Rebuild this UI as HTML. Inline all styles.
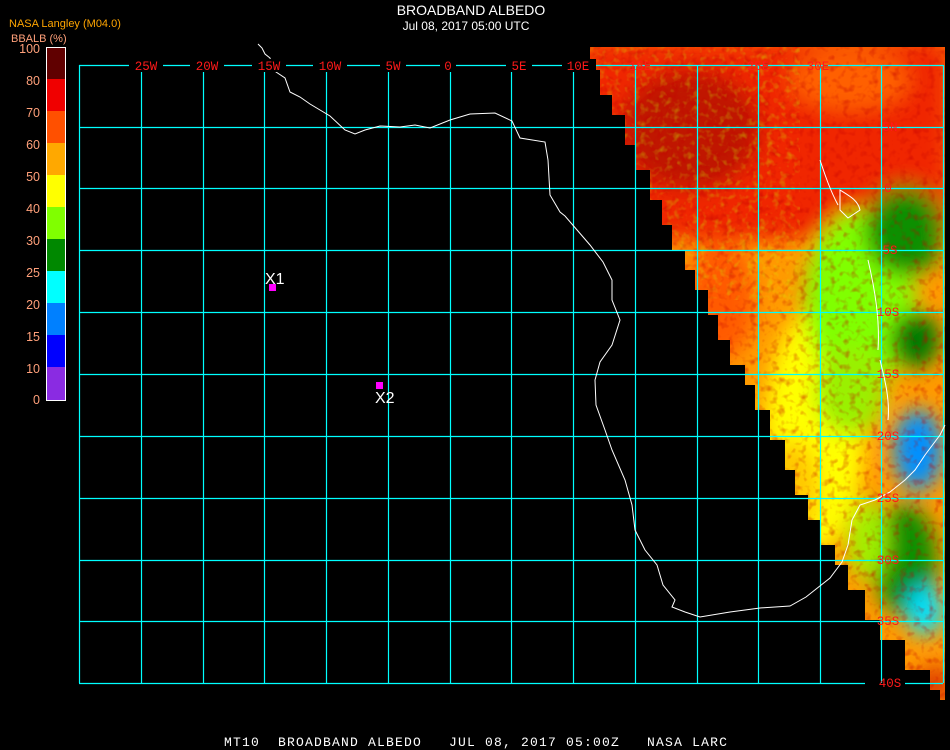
<!DOCTYPE html>
<html><head><meta charset="utf-8"><style>
html,body{margin:0;padding:0;background:#000;}
svg{display:block}
</style></head><body>
<svg width="950" height="750" viewBox="0 0 950 750" xmlns="http://www.w3.org/2000/svg" font-family="Liberation Sans, sans-serif">
<defs>
<clipPath id="dc"><polygon points="585,47 945,47 945,700 940,700 940,690 930,690 930,670 905,670 905,640 880,640 880,620 865,620 865,590 848,590 848,565 835,565 835,545 820,545 820,520 808,520 808,495 795,495 795,470 785,470 785,440 770,440 770,410 755,410 755,385 745,385 745,365 730,365 730,340 718,340 718,315 708,315 708,290 695,290 695,270 685,270 685,250 672,250 672,225 662,225 662,200 650,200 650,170 636,170 636,145 625,145 625,115 612,115 612,95 600,95 600,70 590,70 590,47"/></clipPath>
<filter id="bl"><feGaussianBlur stdDeviation="10"/></filter>
<filter id="nz" x="0" y="0" width="100%" height="100%"><feTurbulence type="fractalNoise" baseFrequency="0.14" numOctaves="2" seed="4"/><feColorMatrix type="matrix" values="0 0 0 0 0.55  0 0 0 0 0  0 0 0 0 0  0 0 0 -2.6 1.3"/></filter>
<filter id="nz2" x="0" y="0" width="100%" height="100%"><feTurbulence type="fractalNoise" baseFrequency="0.15" numOctaves="2" seed="9"/><feColorMatrix type="matrix" values="0 0 0 0 0.6  0 0 0 0 1  0 0 0 0 0  0 0 0 -2.6 1.3"/></filter>
</defs>
<rect width="950" height="750" fill="#000"/>
<g clip-path="url(#dc)">
<rect x="580" y="40" width="370" height="670" fill="#ff9a00"/>
<g filter="url(#bl)">
<rect x="580" y="40" width="370" height="200" fill="#f02800"/>
<ellipse cx="690" cy="130" rx="70" ry="60" fill="#c01800"/>
<ellipse cx="720" cy="300" rx="35" ry="60" fill="#ff5a00"/>
<ellipse cx="815" cy="430" rx="50" ry="120" fill="#ffff00"/>
<ellipse cx="790" cy="490" rx="30" ry="50" fill="#ffc800"/>
<ellipse cx="860" cy="300" rx="55" ry="90" fill="#80ff00"/>
<ellipse cx="850" cy="390" rx="35" ry="45" fill="#9af000"/>
<ellipse cx="905" cy="230" rx="40" ry="45" fill="#108f00"/>
<ellipse cx="915" cy="340" rx="25" ry="28" fill="#007a00"/>
<ellipse cx="918" cy="450" rx="24" ry="40" fill="#0090ff"/>
<ellipse cx="905" cy="560" rx="32" ry="55" fill="#109000"/>
<ellipse cx="868" cy="540" rx="20" ry="40" fill="#a0f000"/>
<ellipse cx="925" cy="610" rx="18" ry="25" fill="#00e0ff"/>
<ellipse cx="935" cy="685" rx="20" ry="20" fill="#e04000"/>
<ellipse cx="850" cy="80" rx="60" ry="30" fill="#ff6000"/>
</g>
<rect x="580" y="40" width="370" height="670" filter="url(#nz)" opacity="0.45"/>
<rect x="580" y="40" width="220" height="260" filter="url(#nz2)" opacity="0.35"/>
</g>
<g stroke="#00ffff" stroke-width="1.2" fill="none">
<path d="M79.5 65V683 M141.5 65V683 M203.5 65V683 M264.5 65V683 M326.5 65V683 M388.5 65V683 M450.5 65V683 M511.5 65V683 M573.5 65V683 M635.5 65V683 M697.5 65V683 M758.5 65V683 M820.5 65V683 M881.5 65V683 M943.5 65V683"/>
<path d="M79 65.5H943 M79 127.5H943 M79 188.5H943 M79 250.5H943 M79 312.5H943 M79 374.5H943 M79 436.5H943 M79 498.5H943 M79 560.5H943 M79 621.5H943 M79 683.5H865 M905 683.5H943"/>
</g>
<path d="M258 44 L262 48 265 54 270 58 273 70 285 78 290 92 300 97 310 104 330 116 345 130 355 134 365 130 380 126 400 127 415 125 430 128 450 120 470 114 495 113 512 121 520 138 545 142 548 160 550 195 560 212 565 216 590 245 603 262 612 280 612 300 620 320 612 345 600 362 595 380 596 405 605 430 612 450 625 480 632 505 635 530 645 550 657 565 663 585 675 600 672 607 685 612 700 617 730 612 760 608 790 606 806 597 830 578 842 562 848 545 852 520 860 505 875 500 890 492 905 480 915 470 925 455 940 435 945 425" fill="none" stroke="#fff" stroke-width="1"/>
<path d="M820 160 C825 175 830 190 838 205 M840 190 C848 195 858 200 860 210 L848 218 840 210Z M868 260 C875 290 880 320 878 350 M880 360 C885 380 890 400 888 420" fill="none" stroke="#fff" stroke-width="1"/>
<g fill="#ff1a1a" font-family="Liberation Mono, monospace" font-size="12.5" text-anchor="middle">
<rect x="129" y="59" width="34" height="13" fill="#000"/><text x="146" y="70">25W</text>
<rect x="190" y="59" width="34" height="13" fill="#000"/><text x="207" y="70">20W</text>
<rect x="252" y="59" width="34" height="13" fill="#000"/><text x="269" y="70">15W</text>
<rect x="313" y="59" width="34" height="13" fill="#000"/><text x="330" y="70">10W</text>
<rect x="380" y="59" width="26" height="13" fill="#000"/><text x="393" y="70">5W</text>
<rect x="440" y="59" width="16" height="13" fill="#000"/><text x="448" y="70">0</text>
<rect x="506" y="59" width="26" height="13" fill="#000"/><text x="519" y="70">5E</text>
<rect x="562" y="59" width="34" height="13" fill="#000"/><text x="578" y="70">10E</text>
<text x="640" y="70">15E</text><text x="758" y="70">25E</text><text x="818" y="70">30E</text>
</g>
<g fill="#ff1a1a" font-family="Liberation Mono, monospace" font-size="12.5" text-anchor="middle">
<text x="890" y="131">5N</text><text x="888" y="192">0</text><text x="890" y="254">5S</text><text x="888" y="316">10S</text>
<text x="888" y="378">15S</text><text x="888" y="440">20S</text><text x="888" y="502">25S</text><text x="888" y="564">30S</text><text x="888" y="625">35S</text>
<text x="890" y="687">40S</text>
</g>
<text x="9" y="27" fill="#ffa500" font-size="11">NASA Langley (M04.0)</text>
<text x="11" y="42" fill="#ffa07a" font-size="11">BBALB (%)</text>
<rect x="46" y="47" width="20" height="32" fill="#600000"/>
<rect x="46" y="79" width="20" height="32" fill="#f00000"/>
<rect x="46" y="111" width="20" height="32" fill="#ff5000"/>
<rect x="46" y="143" width="20" height="32" fill="#ffa800"/>
<rect x="46" y="175" width="20" height="32" fill="#ffff00"/>
<rect x="46" y="207" width="20" height="32" fill="#80ff00"/>
<rect x="46" y="239" width="20" height="32" fill="#008800"/>
<rect x="46" y="271" width="20" height="32" fill="#00ffff"/>
<rect x="46" y="303" width="20" height="32" fill="#0080ff"/>
<rect x="46" y="335" width="20" height="32" fill="#0000ff"/>
<rect x="46" y="367" width="20" height="33" fill="#8a2be2"/>
<rect x="46.5" y="47.5" width="19" height="353" fill="none" stroke="#fff" stroke-width="1"/>
<g fill="#ffa07a" font-size="12.5" text-anchor="end">
<text x="40" y="53">100</text><text x="40" y="85">80</text><text x="40" y="117">70</text><text x="40" y="149">60</text>
<text x="40" y="181">50</text><text x="40" y="213">40</text><text x="40" y="245">30</text><text x="40" y="277">25</text>
<text x="40" y="309">20</text><text x="40" y="341">15</text><text x="40" y="373">10</text><text x="40" y="404">0</text>
</g>
<text x="471" y="15" fill="#fff" font-size="14" text-anchor="middle">BROADBAND ALBEDO</text>
<text x="466" y="30" fill="#fff" font-size="12" text-anchor="middle">Jul 08, 2017 05:00 UTC</text>
<rect x="269" y="284" width="7" height="7" fill="#ff00ff"/>
<text x="265" y="284" fill="#fff" font-size="16">X1</text>
<rect x="376" y="382" width="7" height="7" fill="#ff00ff"/>
<text x="375" y="403" fill="#fff" font-size="16">X2</text>
<text x="224" y="746" fill="#fff" font-family="Liberation Mono, monospace" font-size="13" letter-spacing="1.2" xml:space="preserve">MT10  BROADBAND ALBEDO   JUL 08, 2017 05:00Z   NASA LARC</text>
</svg>
</body></html>
